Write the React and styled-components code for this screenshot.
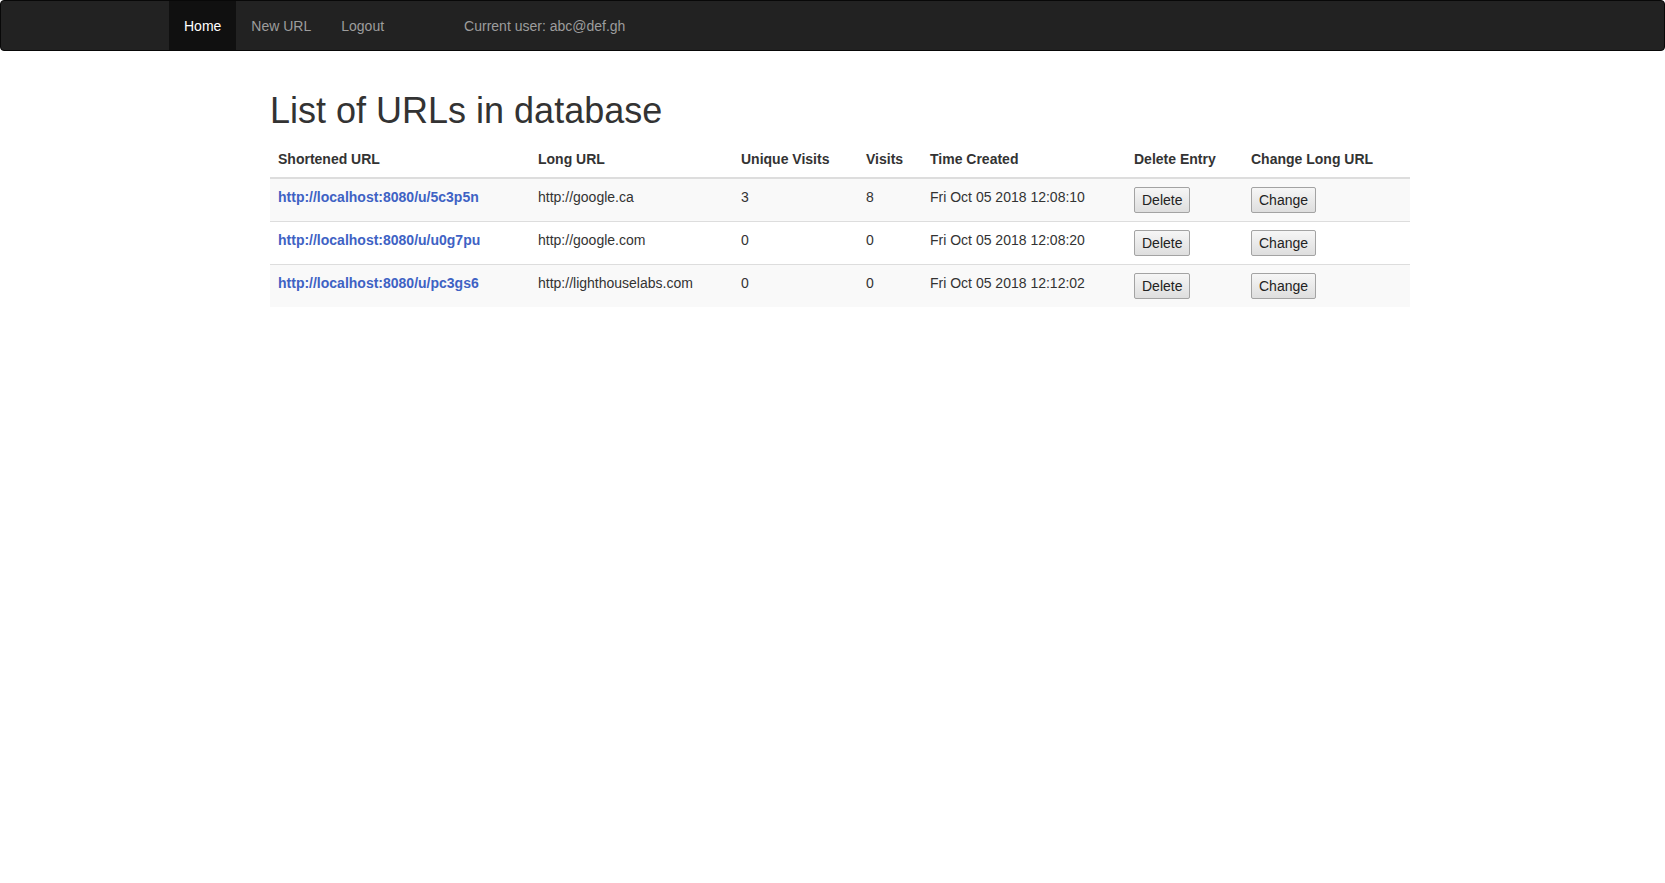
import React from "react";
import styled, { createGlobalStyle } from "styled-components";

const urls = [
  {
    short: "5c3p5n",
    long: "http://google.ca",
    unique: 3,
    visits: 8,
    created: "Fri Oct 05 2018 12:08:10",
  },
  {
    short: "u0g7pu",
    long: "http://google.com",
    unique: 0,
    visits: 0,
    created: "Fri Oct 05 2018 12:08:20",
  },
  {
    short: "pc3gs6",
    long: "http://lighthouselabs.com",
    unique: 0,
    visits: 0,
    created: "Fri Oct 05 2018 12:12:02",
  },
];

const columns = [
  { label: "Shortened URL", width: 260 },
  { label: "Long URL", width: 203 },
  { label: "Unique Visits", width: 125 },
  { label: "Visits", width: 64 },
  { label: "Time Created", width: 204 },
  { label: "Delete Entry", width: 117 },
  { label: "Change Long URL", width: 167 },
];

const App = () => {
  return (
    <>
      <GlobalStyle />
      <Navbar>
        <NavList>
          <NavItem active>Home</NavItem>
          <NavItem>New URL</NavItem>
          <NavItem>Logout</NavItem>
        </NavList>
        <NavText>Current user: abc@def.gh</NavText>
      </Navbar>
      <Main>
        <Title>List of URLs in database</Title>
        <Table>
          <colgroup>
            {columns.map((c) => (
              <col key={c.label} style={{ width: c.width }} />
            ))}
          </colgroup>
          <thead>
            <tr>
              {columns.map((c) => (
                <th key={c.label}>{c.label}</th>
              ))}
            </tr>
          </thead>
          <tbody>
            {urls.map((u) => (
              <tr key={u.short}>
                <td>
                  <ShortLink href="#">
                    http://localhost:8080/u/{u.short}
                  </ShortLink>
                </td>
                <td>{u.long}</td>
                <td>{u.unique}</td>
                <td>{u.visits}</td>
                <td>{u.created}</td>
                <td>
                  <Button>Delete</Button>
                </td>
                <td>
                  <Button>Change</Button>
                </td>
              </tr>
            ))}
          </tbody>
        </Table>
      </Main>
    </>
  );
};

const GlobalStyle = createGlobalStyle`
  * {
    box-sizing: border-box;
  }
  body {
    margin: 0;
    background: #fff;
    color: #333;
    font-family: "Liberation Sans", Arial, sans-serif;
    font-size: 14px;
    line-height: 1.42857143;
  }
`;

const Navbar = styled.nav`
  display: flex;
  align-items: center;
  height: 51px;
  margin-bottom: 20px;
  background: #222;
  border: 1px solid #080808;
  border-radius: 4px;
`;

const NavList = styled.ul`
  display: flex;
  margin: 0;
  padding: 0 0 0 168px;
  list-style: none;
  align-self: stretch;
`;

const NavItem = styled.li`
  padding: 15px;
  line-height: 20px;
  color: ${(p) => (p.active ? "#fff" : "#9d9d9d")};
  background: ${(p) => (p.active ? "#101010" : "transparent")};
  cursor: pointer;
`;

const NavText = styled.p`
  margin: 0 0 0 65px;
  line-height: 20px;
  color: #9d9d9d;
`;

const Main = styled.main`
  display: flow-root;
  width: 1140px;
  margin-left: 270px;
`;

const Title = styled.h1`
  margin: 20px 0 10px;
  font-size: 36px;
  font-weight: 500;
  line-height: 1.1;
  color: #333;
`;

const Table = styled.table`
  width: 100%;
  table-layout: fixed;
  border-collapse: collapse;
  border-spacing: 0;
  margin-bottom: 20px;

  th {
    padding: 8px;
    text-align: left;
    vertical-align: bottom;
    line-height: 20px;
    font-weight: 700;
    border-bottom: 2px solid #ddd;
    white-space: nowrap;
  }

  td {
    padding: 8px;
    vertical-align: top;
    line-height: 20px;
    border-top: 1px solid #ddd;
    white-space: nowrap;
  }

  tbody tr:nth-of-type(odd) {
    background: #f9f9f9;
  }
`;

const ShortLink = styled.a`
  color: #3e62c4;
  font-weight: 700;
  text-decoration: none;
`;

const Button = styled.button`
  font-family: inherit;
  font-size: 14px;
  line-height: 20px;
  color: #222;
  padding: 2px 7px;
  border: 1px solid #a3a3a3;
  border-radius: 2px;
  background: linear-gradient(#f6f6f6, #dedede);
  cursor: pointer;
`;

export default App;
